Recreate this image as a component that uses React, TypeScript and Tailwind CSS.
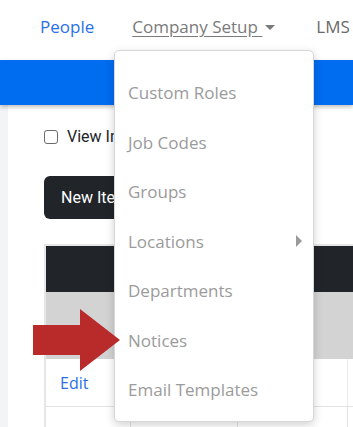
import React from 'react';

const menuItems = ['Custom Roles', 'Job Codes', 'Groups', 'Locations', 'Departments', 'Notices', 'Email Templates'];

function Dropdown() {
  return (
    <div className="absolute left-[114px] top-[50px] w-[200px] h-[372px] bg-white border border-[#d6d6d6] rounded-[5px] shadow-[0_3px_10px_rgba(0,0,0,0.18)] pt-[17px] z-20">
      {menuItems.map((item) => (
        <div key={item} className="h-[49.5px] flex items-center justify-between pl-[13px] pr-[11px] text-[#9b9b9b] text-[17px] font-['Open_Sans',sans-serif]">
          <span>{item}</span>
          {item === 'Locations' && (
            <span className="w-0 h-0 border-y-[6px] border-y-transparent border-l-[6px] border-l-[#9a9a9a]" />
          )}
        </div>
      ))}
    </div>
  );
}

function RedArrow() {
  return (
    <svg className="absolute left-[33px] top-[309px] z-30" width="88" height="62" viewBox="0 0 88 62">
      <polygon points="0,16 47,16 47,0 87,31 47,62 47,46 0,46" fill="#b92b2b" />
    </svg>
  );
}

export default function App() {
  return (
    <div className="relative w-[353px] h-[427px] overflow-hidden bg-white font-['Roboto',sans-serif]">
      {/* top nav */}
      <nav className="h-[60px] flex items-center pb-[6px] text-[17px] font-['Open_Sans',sans-serif]">
        <span className="ml-[40px] text-[#2a6fe6]">People</span>
        <span className="ml-[38px] flex items-center text-[#7a7a7a]">
          <span className="underline underline-offset-[3px] whitespace-pre">Company Setup&nbsp;</span>
          <span className="ml-[3px] w-0 h-0 border-x-[5px] border-x-transparent border-t-[5px] border-t-[#7a7a7a]" />
        </span>
        <span className="ml-[41px] text-[#6a6a6a] whitespace-nowrap">LMS</span>
      </nav>
      <div className="h-[45px] bg-[#006cf0] relative z-10 shadow-[0_2px_4px_rgba(0,0,0,0.25)]" />

      {/* body */}
      <div className="bg-[#f3f4f6] pl-[8px] h-[322px]">
        <div className="bg-white h-full pt-[25px] pl-[36px]">
          <label className="flex items-center gap-[9px] text-[16px] text-[#212529] h-[14px]">
            <span className="w-[14px] h-[14px] border border-[#6b6b6b] rounded-[3px] bg-white" />
            <span className="whitespace-nowrap">View Inactive</span>
          </label>
          <button className="mt-[32px] h-[43px] px-[17px] bg-[#212529] text-white text-[16px] rounded-[6px] whitespace-nowrap">
            New Item
          </button>
          <div className="mt-[25px] border-l-[2px] border-t-[2px] border-[#e6e6e6] w-[400px]">
            <div className="h-[46px] bg-[#212529]" />
            <div className="h-[67px] bg-[#d3d3d3]" />
            <div className="h-[48px] flex border-b border-[#e2e2e2]">
              <div className="w-[85px] flex items-center pl-[14px] text-[#2a6fe6] text-[16px] font-['Open_Sans',sans-serif] border-r border-[#ececec]">Edit</div>
              <div className="w-[107px] border-r border-[#ececec]" />
              <div className="w-[110px] border-r border-[#ececec]" />
              <div className="flex-1" />
            </div>
            <div className="h-[40px] flex">
              <div className="w-[85px] border-r border-[#e2e2e2]" />
              <div className="w-[107px] border-r border-[#e2e2e2]" />
              <div className="w-[110px] border-r border-[#e2e2e2]" />
              <div className="flex-1" />
            </div>
          </div>
        </div>
      </div>

      <Dropdown />
      <RedArrow />
    </div>
  );
}
